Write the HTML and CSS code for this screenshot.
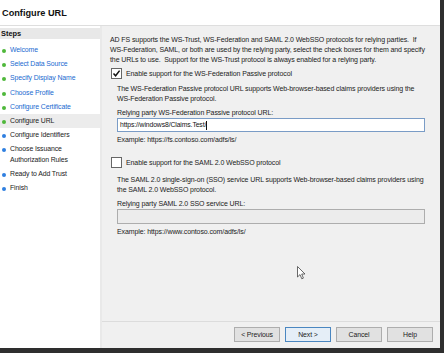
FILE: index.html
```html
<!DOCTYPE html>
<html lang="en">
<head>
  <meta charset="UTF-8">
  <title>Configure URL</title>
  <link rel="stylesheet" href="styles.css">
</head>
<body>
  <div class="window">
    <div class="header">Configure URL</div>
    <div class="main">
      <div class="steps">
        <div class="steps-title">Steps</div>
        <ul class="step-list">
          <li class="done"><a href="#">Welcome</a></li>
          <li class="done"><a href="#">Select Data Source</a></li>
          <li class="done"><a href="#">Specify Display Name</a></li>
          <li class="done"><a href="#">Choose Profile</a></li>
          <li class="done"><a href="#">Configure Certificate</a></li>
          <li class="current">Configure URL</li>
          <li>Configure Identifiers</li>
          <li>Choose Issuance<br>Authorization Rules</li>
          <li>Ready to Add Trust</li>
          <li>Finish</li>
        </ul>
      </div>
      <div class="right">
        <div class="content">
          <p class="intro">AD FS supports the WS-Trust, WS-Federation and SAML 2.0 WebSSO protocols for relying parties.&nbsp; If WS-Federation, SAML, or both are used by the relying party, select the check boxes for them and specify the URLs to use.&nbsp; Support for the WS-Trust protocol is always enabled for a relying party.</p>

          <label class="check">
            <span class="box checked">
              <svg viewBox="0 0 9 9" width="9" height="9"><path d="M1.5 4.5 L3.6 6.8 L7.6 1.6" fill="none" stroke="#111" stroke-width="1.5"/></svg>
            </span>
            Enable support for the WS-Federation Passive protocol
          </label>
          <div class="group">
            <p>The WS-Federation Passive protocol URL supports Web-browser-based claims providers using the WS-Federation Passive protocol.</p>
            <div class="field-label">Relying party WS-Federation Passive protocol URL:</div>
            <div class="input">https://windows8/Claims.Test/<span class="caret"></span></div>
            <div class="example">Example: https://fs.contoso.com/adfs/ls/</div>
          </div>

          <label class="check second">
            <span class="box"></span>
            Enable support for the SAML 2.0 WebSSO protocol
          </label>
          <div class="group saml">
            <p>The SAML 2.0 single-sign-on (SSO) service URL supports Web-browser-based claims providers using the SAML 2.0 WebSSO protocol.</p>
            <div class="field-label">Relying party SAML 2.0 SSO service URL:</div>
            <div class="input disabled"></div>
            <div class="example">Example: https://www.contoso.com/adfs/ls/</div>
          </div>

          <svg class="cursor" viewBox="0 0 9 14" width="9" height="14"><path d="M0.5 0.5 L0.5 11 L3 8.6 L4.8 12.8 L6.4 12.1 L4.7 8 L8 8 Z" fill="#fff" stroke="#444" stroke-width="0.8"/></svg>
        </div>
        <div class="footer">
          <button>&lt; Previous</button>
          <button class="default">Next &gt;</button>
          <button>Cancel</button>
          <button>Help</button>
        </div>
      </div>
    </div>
  </div>
</body>
</html>
```

FILE: styles.css
```css
body {
  margin: 0;
  background: #fff;
  font-family: "Liberation Sans", Arial, sans-serif;
  color: #222;
}

.window {
  width: 440px;
  height: 348px;
  display: flex;
  flex-direction: column;
  border-right: 4px solid #2e2e2e;
  border-bottom: 5px solid #2e2e2e;
}

.header {
  height: 25px;
  line-height: 27px;
  padding-left: 2px;
  font-size: 9.2px;
  font-weight: bold;
  color: #111;
  border-bottom: 1px solid #dedede;
}

.main {
  flex: 1;
  display: flex;
}

/* left steps column */
.steps {
  width: 100px;
  background: #fff;
  border-right: 2px solid #e9e9e9;
}

.steps-title {
  margin-top: 2px;
  height: 11px;
  line-height: 11px;
  padding-left: 1px;
  background: #e8e8e8;
  font-size: 7.4px;
  font-weight: bold;
  color: #111;
}

.step-list {
  list-style: none;
  margin: 4px 0 0;
  padding: 0;
  font-size: 6.9px;
  letter-spacing: -0.1px;
}

.step-list li {
  position: relative;
  padding: 2px 0 2px 10px;
  line-height: 10.2px;
  color: #222;
}

.step-list li::before {
  content: "";
  position: absolute;
  left: 2px;
  top: 6px;
  width: 4px;
  height: 4px;
  border-radius: 50%;
  background: #2f7fe0;
}

.step-list li.done::before,
.step-list li.current::before {
  background: #4fb83a;
}

.step-list li.current {
  background: #ececec;
}

.step-list a {
  color: #1a6ad0;
  text-decoration: none;
}

/* right side */
.right {
  flex: 1;
  display: flex;
  flex-direction: column;
  background: #f0f0f0;
}

.content {
  position: relative;
  flex: 1;
  padding: 9px 15px 0 8px;
  font-size: 7px;
  letter-spacing: -0.1px;
  line-height: 10px;
}

.content p {
  margin: 0;
}

.intro {
  margin-bottom: 3px !important;
}

.check {
  display: flex;
  align-items: center;
  gap: 4px;
  margin-left: 1px;
  height: 11px;
}

.check.second {
  margin-top: 12px;
}

.box {
  width: 9px;
  height: 9px;
  border: 1px solid #666;
  background: #fff;
  display: flex;
}

.group {
  padding-left: 7px;
  margin-top: 5px;
}

.group.saml {
  margin-top: 7px;
}

.group p {
  line-height: 9.5px;
}

.field-label {
  margin-top: 5px;
}

.input {
  height: 12px;
  line-height: 12px;
  padding-left: 2px;
  border: 1px solid #7a9cc6;
  background: #fff;
  color: #111;
  font-size: 6.8px;
}

.input.disabled {
  height: 13px;
  border-color: #adadad;
  background: #ececec;
}

.caret {
  display: inline-block;
  width: 1px;
  height: 9px;
  background: #111;
  vertical-align: middle;
}

.example {
  margin-top: 3px;
}

.cursor {
  position: absolute;
  left: 195px;
  top: 240px;
}

.footer {
  height: 21px;
  border-top: 1px solid #dcdcdc;
  display: flex;
  justify-content: flex-end;
  align-items: flex-start;
  gap: 5px;
  padding: 5px 7px 0 0;
}

.footer button {
  width: 46px;
  height: 15px;
  padding: 0;
  font-family: "Liberation Sans", Arial, sans-serif;
  font-size: 6.9px;
  letter-spacing: -0.1px;
  color: #222;
  background: #e1e1e1;
  border: 1px solid #adadad;
  border-radius: 0;
}

.footer button.default {
  border-color: #4a86c0;
  background: #e5eef7;
}
```
